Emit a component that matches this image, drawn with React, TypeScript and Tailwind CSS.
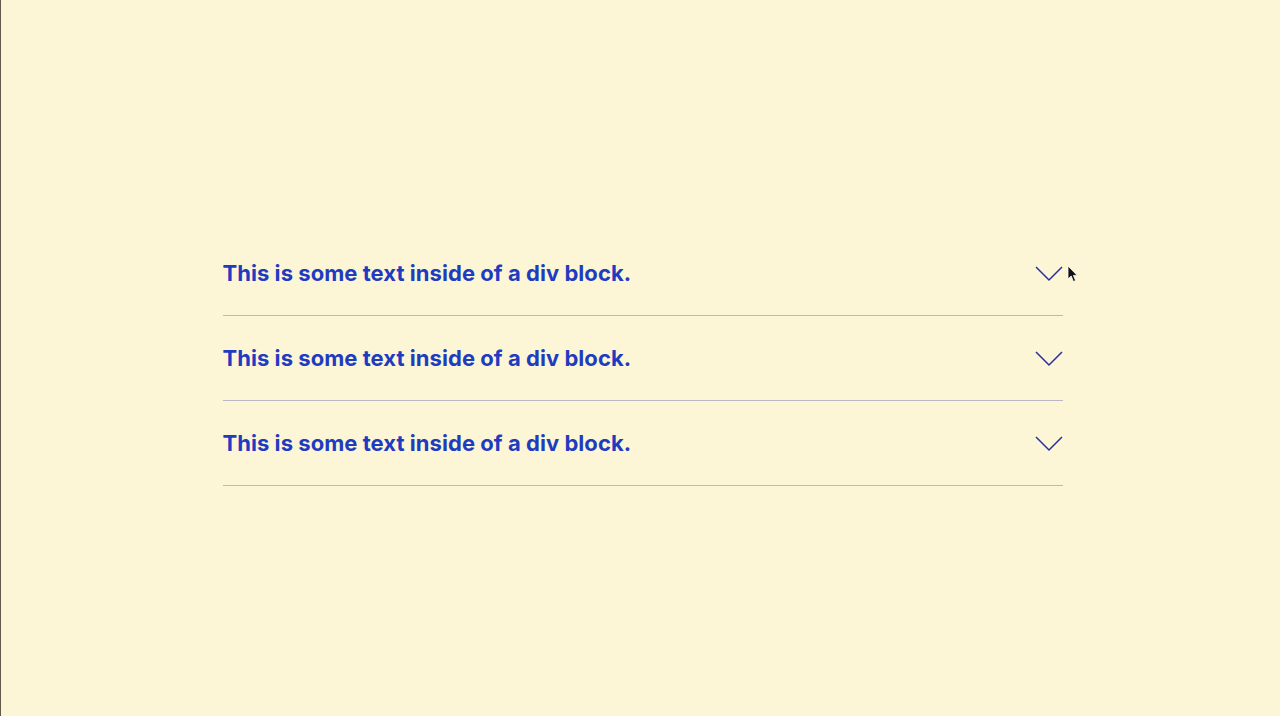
const items = [
  "This is some text inside of a div block.",
  "This is some text inside of a div block.",
  "This is some text inside of a div block.",
];

function Chevron() {
  return (
    <svg width="28" height="17" viewBox="0 0 28 17" fill="none" className="shrink-0">
      <path d="M1 2 L14 15 L27 2" stroke="#2a2f9a" strokeWidth="1.5" />
    </svg>
  );
}

function Cursor() {
  return (
    <svg width="11" height="18" viewBox="0 0 11 18" className="absolute left-[1066px] top-[265px]">
      <path d="M1 1 L1 14 L4.2 11 L6.4 16.5 L8.6 15.6 L6.4 10.4 L10.2 10.4 Z" fill="#111" stroke="#fff" strokeWidth="0.8" />
    </svg>
  );
}

export default function App() {
  return (
    <div className="relative h-[716px] w-full bg-[#fdf6d6] border-l border-[#3a3428]/80 font-['Inter',sans-serif]">
      <div className="mx-auto w-[840px] pt-[231px] translate-x-[2px]">
        {items.map((text, i) => (
          <div
            key={i}
            className="flex h-[85px] items-center justify-between border-b border-[#bab6c6]"
          >
            <span className="text-[22px] font-bold tracking-[0.05px] text-[#1f3cc0]">{text}</span>
            <Chevron />
          </div>
        ))}
      </div>
      <Cursor />
    </div>
  );
}
